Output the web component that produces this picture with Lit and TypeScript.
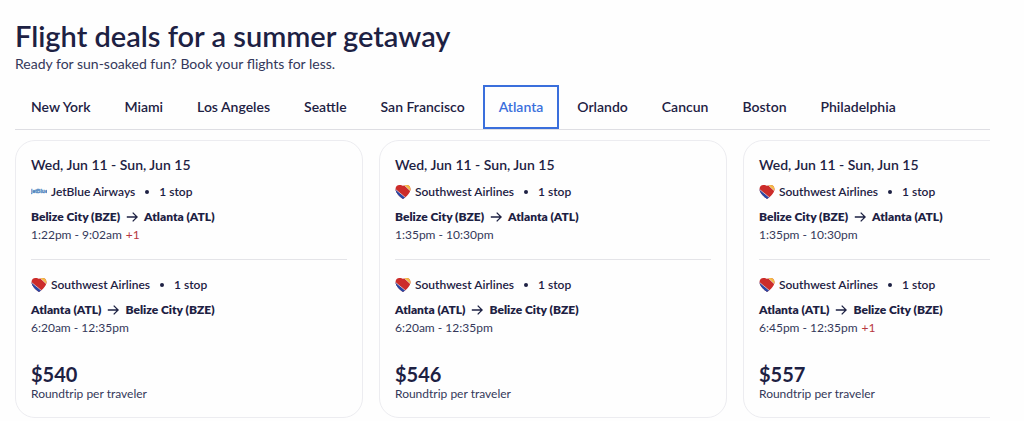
import { LitElement, html, css } from "lit";
import { customElement, property, state } from "lit/decorators.js";

interface Leg {
  airline: "JetBlue Airways" | "Southwest Airlines";
  from: string;
  to: string;
  time: string;
  extraDays?: string;
}

interface Deal {
  dates: string;
  legs: Leg[];
  price: string;
}

const BZE = "Belize City (BZE)";
const ATL = "Atlanta (ATL)";

const CITIES = [
  "New York", "Miami", "Los Angeles", "Seattle", "San Francisco",
  "Atlanta", "Orlando", "Cancun", "Boston", "Philadelphia",
];

const DEALS: Deal[] = [
  {
    dates: "Wed, Jun 11 - Sun, Jun 15",
    legs: [
      { airline: "JetBlue Airways", from: BZE, to: ATL, time: "1:22pm - 9:02am", extraDays: "+1" },
      { airline: "Southwest Airlines", from: ATL, to: BZE, time: "6:20am - 12:35pm" },
    ],
    price: "$540",
  },
  {
    dates: "Wed, Jun 11 - Sun, Jun 15",
    legs: [
      { airline: "Southwest Airlines", from: BZE, to: ATL, time: "1:35pm - 10:30pm" },
      { airline: "Southwest Airlines", from: ATL, to: BZE, time: "6:20am - 12:35pm" },
    ],
    price: "$546",
  },
  {
    dates: "Wed, Jun 11 - Sun, Jun 15",
    legs: [
      { airline: "Southwest Airlines", from: BZE, to: ATL, time: "1:35pm - 10:30pm" },
      { airline: "Southwest Airlines", from: ATL, to: BZE, time: "6:45pm - 12:35pm", extraDays: "+1" },
    ],
    price: "$557",
  },
];

const heartLogo = html`
  <svg class="logo" viewBox="0 0 16 16" aria-hidden="true">
    <defs>
      <clipPath id="heart">
        <path d="M8 15C6.600 14.200 .5 9.400 .5 5.200 .5 2.600 2.200 1 4.400 1 6 1 7.300 1.300 8 1.900 8.700 1.300 10 1 11.600 1 13.800 1 15.500 2.600 15.500 5.200 15.500 9.400 9.400 14.200 8 15Z" />
      </clipPath>
    </defs>
    <g clip-path="url(#heart)">
      <rect width="16" height="16" fill="#cc2c2a" />
      <path d="M0 5L12 15V16H0Z" fill="#2748a6" />
      <path d="M8 0L16 7.500V0Z" fill="#f5bb45" />
      <path d="M-1 4.200L12 14.800M8 0L16 7.500" fill="none" stroke="#e6dfe4" stroke-width=".7" />
    </g>
  </svg>`;

const jetBlueLogo = html`
  <svg class="logo" viewBox="0 0 16 16" aria-hidden="true">
    <text x="0" y="9" font-family="Liberation Sans, sans-serif" font-size="5" font-weight="700" fill="#4f86c0" stroke="#4f86c0" stroke-width=".3">jetBlue</text>
  </svg>`;

@customElement("flight-card")
export class FlightCard extends LitElement {
  @property({ attribute: false }) deal!: Deal;

  static styles = css`
    :host {
      display: block;
      box-sizing: border-box;
      padding: 15px;
      border: 1px solid #ececf0;
      border-radius: 20px;
      color: #1d2143;
      font-size: 12px;
      line-height: 18px;
      white-space: nowrap;
    }
    .dates { margin: 0 0 8px; font-size: 14px; font-weight: 600; line-height: 18px; }
    .leg + .leg { margin-top: 15px; padding-top: 15px; border-top: 1px solid #e4e4e8; }
    .airline { display: flex; align-items: center; height: 20px; margin-bottom: 6px; font-weight: 600; }
    .logo { width: 16px; height: 16px; margin-right: 4px; flex: none; }
    .dot { width: 4px; height: 4px; margin: 0 10px; border-radius: 50%; background: currentColor; }
    .route { display: flex; align-items: center; gap: 6px; font-weight: 800; }
    .arrow { width: 12px; height: 12px; flex: none; }
    .time { color: #34385a; }
    .extra { margin-left: 4px; color: #b8373e; }
    .price { margin-top: 25px; font-size: 20px; font-weight: 700; line-height: 24px; }
    .note { color: #34385a; line-height: 16px; }
  `;

  render() {
    return html`
      <h3 class="dates">${this.deal.dates}</h3>
      ${this.deal.legs.map((leg) => html`
        <div class="leg">
          <div class="airline">
            ${leg.airline === "JetBlue Airways" ? jetBlueLogo : heartLogo}
            <span>${leg.airline}</span><span class="dot"></span><span>1 stop</span>
          </div>
          <div class="route">
            <span>${leg.from}</span>
            <svg class="arrow" viewBox="0 0 12 12" fill="none" stroke="currentColor" stroke-width="1.300" role="img" aria-label="to">
              <path d="M.8 6H11M6.700 1.600L11.100 6 6.700 10.400" />
            </svg>
            <span>${leg.to}</span>
          </div>
          <div class="time">${leg.time}${leg.extraDays ? html`<span class="extra">${leg.extraDays}</span>` : null}</div>
        </div>`)}
      <div class="price">${this.deal.price}</div>
      <div class="note">Roundtrip per traveler</div>
    `;
  }
}

@customElement("app-root")
export class AppRoot extends LitElement {
  @state() private city = "Atlanta";

  static styles = css`
    :host {
      display: block;
      padding: 18px 34px 3px 15px;
      background: #fefefe;
      color: #1d2143;
      font-family: Lato, sans-serif;
    }
    .title { margin: 0; font-size: 29px; font-weight: 600; line-height: 36px; }
    .subtitle { margin: 0 0 11px; color: #34385a; font-size: 14px; line-height: 20px; }
    .tabs { display: flex; gap: 2px; border-bottom: 1px solid #dedee3; white-space: nowrap; }
    .tab {
      height: 44px;
      padding: 0 14px;
      border: 2px solid transparent;
      background: none;
      color: inherit;
      font: 600 14px/20px Lato, sans-serif;
      cursor: pointer;
    }
    .tab[aria-selected="true"] { border-color: #3a6fdc; color: #3a6fdc; }
    .deals {
      display: grid;
      grid-auto-flow: column;
      grid-auto-columns: 348px;
      gap: 16px;
      margin-top: 10px;
      overflow: hidden;
    }
  `;

  render() {
    return html`
      <h2 class="title">Flight deals for a summer getaway</h2>
      <p class="subtitle">Ready for sun-soaked fun? Book your flights for less.</p>
      <div class="tabs" role="tablist">
        ${CITIES.map((name) => html`
          <button class="tab" role="tab" aria-selected=${name === this.city ? "true" : "false"}
            @click=${() => (this.city = name)}>${name}</button>`)}
      </div>
      <div class="deals">
        ${DEALS.map((deal) => html`<flight-card .deal=${deal}></flight-card>`)}
      </div>
    `;
  }
}
